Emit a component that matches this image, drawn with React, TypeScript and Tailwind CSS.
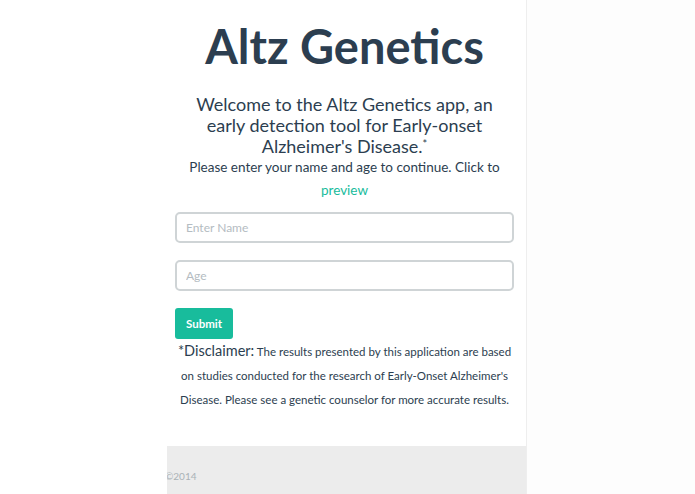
export default function App() {
  return (
    <div
      className="flex min-h-[494px] bg-[#fdfdfd] text-[#2c3e50]"
      style={{ fontFamily: "Lato, 'Open Sans', sans-serif" }}
    >
      <div className="w-[167px] shrink-0 bg-white" />
      <div className="flex w-[360px] shrink-0 flex-col border-r border-[#eeeeee] bg-white">
        <div className="flex flex-col items-center pl-2 pr-3 pt-[14px]">
          <h1 className="text-[47px] font-bold leading-[64px]">Altz Genetics</h1>
          <h2 className="mt-[16px] text-center text-[18px] leading-[21px]">
            Welcome to the Altz Genetics app, an
            <br />
            early detection tool for Early-onset
            <br />
            Alzheimer's Disease.<sup className="text-[11px]">*</sup>
          </h2>
          <p className="whitespace-nowrap text-[13.5px] leading-[20px]">
            Please enter your name and age to continue. Click to
          </p>
          <a href="#" className="mt-[3px] text-[13.5px] leading-[20px] text-[#18bc9c]">
            preview
          </a>
        </div>

        <form className="mt-[12px] flex flex-col pl-2 pr-3" onSubmit={(e) => e.preventDefault()}>
          <input
            placeholder="Enter Name"
            className="h-[31px] w-full rounded-[5px] border-2 border-[#cfd4d6] px-[9px] text-[12px] outline-none placeholder:text-[#b4bcc2]"
          />
          <input
            placeholder="Age"
            className="mt-[17px] h-[31px] w-full rounded-[5px] border-2 border-[#cfd4d6] px-[9px] text-[12px] outline-none placeholder:text-[#b4bcc2]"
          />
          <button
            type="submit"
            className="mt-[17px] h-[31px] w-[58px] rounded-[3px] bg-[#18bc9c] text-[11.5px] font-bold text-white"
          >
            Submit
          </button>
          <p className="whitespace-nowrap text-center text-[11.5px] leading-[24px] text-[#2c3e50]">
            <span className="text-[14.5px]">*Disclaimer:</span> The results presented by this application are
            based
            <br />
            on studies conducted for the research of Early-Onset Alzheimer's
            <br />
            Disease. Please see a genetic counselor for more accurate results.
          </p>
        </form>

        <footer className="mt-[34px] h-[60px] overflow-hidden bg-[#ececec]">
          <p className="-ml-[2px] pt-[23px] text-[10px] leading-[14px] text-[#aab2b7]">©2014</p>
        </footer>
      </div>
      <div className="flex-1" />
    </div>
  );
}
